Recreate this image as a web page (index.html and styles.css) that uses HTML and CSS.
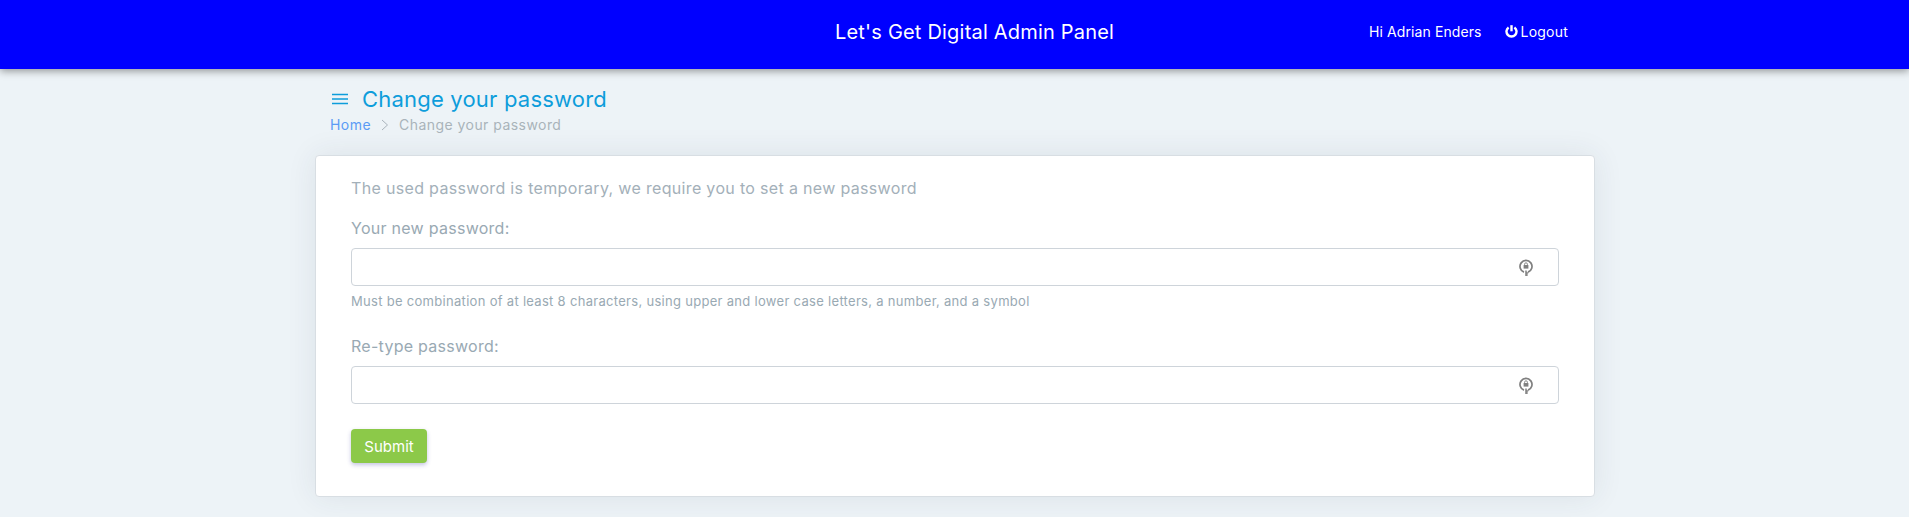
FILE: index.html
```html
<!DOCTYPE html>
<html lang="en">
<head>
<meta charset="utf-8">
<title>Change your password</title>
<link rel="stylesheet" href="styles.css">
</head>
<body>
<header class="topbar">
  <div class="topbar-title">Let's Get Digital Admin Panel</div>
  <nav class="topbar-user">
    <span class="user-name">Hi Adrian Enders</span>
    <a class="logout" href="#">
      <svg class="power" viewBox="0 0 14 14" width="13" height="13" aria-hidden="true"><path d="M3.9 2.6a5.4 5.4 0 1 0 6.2 0" fill="none" stroke="#fff" stroke-width="2.6"/><path d="M7 .2v6.6" fill="none" stroke="#fff" stroke-width="2.6"/></svg>
      <span>Logout</span>
    </a>
  </nav>
</header>
<main class="page">
  <div class="page-head">
    <h1 class="page-title">
      <svg class="menu-icon" viewBox="0 0 16 12" width="16" height="12" aria-hidden="true"><path d="M0 1.5h16M0 6h16M0 10.5h16" stroke="#0d9ddb" stroke-width="1.5" fill="none"/></svg>
      <span>Change your password</span>
    </h1>
    <div class="crumbs">
      <a class="crumb-link" href="#">Home</a>
      <svg class="crumb-sep" viewBox="0 0 8 12" width="8" height="12" aria-hidden="true"><path d="M1 1l5.5 5L1 11" stroke="#aab4bc" stroke-width="1" fill="none"/></svg>
      <span class="crumb-current">Change your password</span>
    </div>
  </div>
  <section class="card">
    <p class="notice">The used password is temporary, we require you to set a new password</p>
    <label class="field-label">Your new password:</label>
    <div class="input">
      <svg class="key" viewBox="0 0 14 17" width="14" height="17" aria-hidden="true"><path d="M5 13.1A6 6 0 1 1 9 13.1" fill="none" stroke="#808080" stroke-width="1.7"/><path d="M5.6 6.2V5.2a1.4 1.4 0 0 1 2.8 0v1" fill="none" stroke="#808080" stroke-width=".9"/><rect x="4.6" y="6" width="4.8" height="3.6" fill="#808080"/><path d="M7 11.5V17M7 14h2.2M7 16h1.8" stroke="#808080" stroke-width="1.5" fill="none"/></svg>
    </div>
    <p class="help">Must be combination of at least 8 characters, using upper and lower case letters, a number, and a symbol</p>
    <label class="field-label second">Re-type password:</label>
    <div class="input">
      <svg class="key" viewBox="0 0 14 17" width="14" height="17" aria-hidden="true"><path d="M5 13.1A6 6 0 1 1 9 13.1" fill="none" stroke="#808080" stroke-width="1.7"/><path d="M5.6 6.2V5.2a1.4 1.4 0 0 1 2.8 0v1" fill="none" stroke="#808080" stroke-width=".9"/><rect x="4.6" y="6" width="4.8" height="3.6" fill="#808080"/><path d="M7 11.5V17M7 14h2.2M7 16h1.8" stroke="#808080" stroke-width="1.5" fill="none"/></svg>
    </div>
    <button class="submit" type="button">Submit</button>
  </section>
</main>
</body>
</html>
```
FILE: styles.css
```css
* { box-sizing: border-box; }
html, body { margin: 0; height: 100%; overflow: hidden; }
body {
  background: #edf3f7;
  font-family: Inter, "Open Sans", "Liberation Sans", sans-serif;
  color: #99a9b3;
}
.topbar {
  height: 69px;
  background: #0000ff;
  color: #fff;
  display: flex;
  align-items: center;
  box-shadow: 0 2px 8px rgba(0, 0, 0, .4);
  padding-left: 835px;
  padding-bottom: 6px;
}
.topbar-title { font-size: 20px; letter-spacing: .2px; width: 534px; white-space: nowrap; }
.topbar-user { display: flex; align-items: center; gap: 23px; font-size: 14px; letter-spacing: .1px; }
.logout { display: flex; align-items: center; gap: 3px; color: #fff; text-decoration: none; letter-spacing: .2px; }
.page { width: 1280px; margin: 0 auto 0 315px; }
.page-head { padding: 17px 0 0 15px; height: 86px; }
.page-title {
  margin: 0;
  display: flex;
  align-items: center;
  gap: 14px;
  font-size: 22px;
  line-height: 26px;
  letter-spacing: .2px;
  font-weight: 400;
  color: #0d9ddb;
  padding-left: 2px;
}
.crumbs { display: flex; align-items: center; gap: 10px; font-size: 14px; line-height: 20px; margin-top: 3px; letter-spacing: .45px; }
.crumb-link { color: #5b9bf5; text-decoration: none; }
.crumb-current { color: #a9b3ba; }
.card {
  height: 342px;
  background: #fff;
  border: 1px solid #d8dee3;
  border-radius: 4px;
  box-shadow: 0 0 30px rgba(40, 60, 80, .09);
  padding: 20px 35px 0;
}
.notice { margin: 0 0 16px; font-size: 16px; line-height: 24px; letter-spacing: .33px; color: #a3b0b9; }
.field-label { display: block; font-size: 16px; line-height: 24px; margin-bottom: 8px; letter-spacing: .27px; color: #99a9b3; }
.field-label.second { margin-top: 23px; }
.input {
  height: 38px;
  border: 1px solid #ced4da;
  border-radius: 4px;
  background: #fff;
  display: flex;
  align-items: center;
  justify-content: flex-end;
  padding-right: 25px;
}
.help { margin: 5px 0 0; font-size: 13px; line-height: 20px; letter-spacing: .3px; color: #99a9b3; }
.submit {
  display: block;
  margin-top: 25px;
  width: 76px;
  height: 34px;
  border: 0;
  border-radius: 4px;
  background: #8cc949;
  color: #fff;
  font: 400 15px Inter, "Open Sans", sans-serif;
  box-shadow: 0 2px 4px rgba(60, 60, 160, .3);
}
```
